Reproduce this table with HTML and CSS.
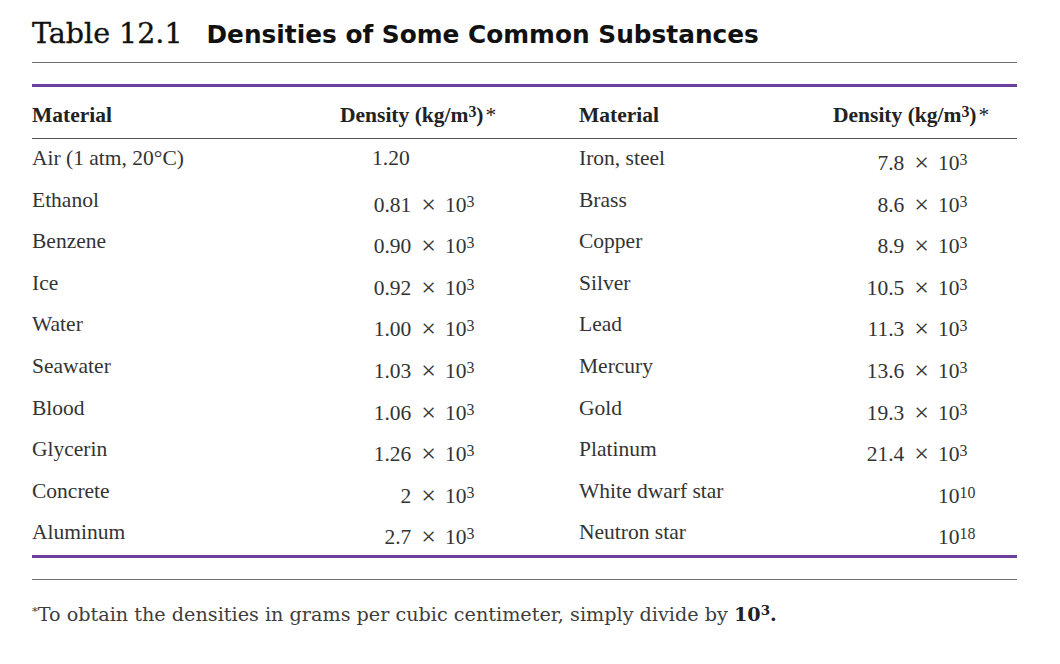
FILE: index.html
```html
<!DOCTYPE html>
<html lang="en">
<head>
<meta charset="utf-8">
<title>Table 12.1 Densities of Some Common Substances</title>
<link rel="stylesheet" href="styles.css">
</head>
<body>
<main class="sheet">
  <h1 class="title"><span class="title-num">Table 12.1</span><span class="title-cap">Densities of Some Common Substances</span></h1>
  <div class="rule-gray"></div>
  <div class="table">
    <div class="row head">
      <div class="cell">Material</div>
      <div class="cell">Density (kg/m<sup>3</sup>)<span class="ast">*</span></div>
      <div class="cell">Material</div>
      <div class="cell">Density (kg/m<sup>3</sup>)<span class="ast">*</span></div>
    </div>
    <div class="row">
      <div class="cell">Air (1 atm, 20°C)</div>
      <div class="cell plain">1.20</div>
      <div class="cell">Iron, steel</div>
      <div class="cell val"><span class="mant">7.8<span class="x">×</span></span><span class="pow">10<sup>3</sup></span></div>
    </div>
    <div class="row">
      <div class="cell">Ethanol</div>
      <div class="cell val"><span class="mant">0.81<span class="x">×</span></span><span class="pow">10<sup>3</sup></span></div>
      <div class="cell">Brass</div>
      <div class="cell val"><span class="mant">8.6<span class="x">×</span></span><span class="pow">10<sup>3</sup></span></div>
    </div>
    <div class="row">
      <div class="cell">Benzene</div>
      <div class="cell val"><span class="mant">0.90<span class="x">×</span></span><span class="pow">10<sup>3</sup></span></div>
      <div class="cell">Copper</div>
      <div class="cell val"><span class="mant">8.9<span class="x">×</span></span><span class="pow">10<sup>3</sup></span></div>
    </div>
    <div class="row">
      <div class="cell">Ice</div>
      <div class="cell val"><span class="mant">0.92<span class="x">×</span></span><span class="pow">10<sup>3</sup></span></div>
      <div class="cell">Silver</div>
      <div class="cell val"><span class="mant">10.5<span class="x">×</span></span><span class="pow">10<sup>3</sup></span></div>
    </div>
    <div class="row">
      <div class="cell">Water</div>
      <div class="cell val"><span class="mant">1.00<span class="x">×</span></span><span class="pow">10<sup>3</sup></span></div>
      <div class="cell">Lead</div>
      <div class="cell val"><span class="mant">11.3<span class="x">×</span></span><span class="pow">10<sup>3</sup></span></div>
    </div>
    <div class="row">
      <div class="cell">Seawater</div>
      <div class="cell val"><span class="mant">1.03<span class="x">×</span></span><span class="pow">10<sup>3</sup></span></div>
      <div class="cell">Mercury</div>
      <div class="cell val"><span class="mant">13.6<span class="x">×</span></span><span class="pow">10<sup>3</sup></span></div>
    </div>
    <div class="row">
      <div class="cell">Blood</div>
      <div class="cell val"><span class="mant">1.06<span class="x">×</span></span><span class="pow">10<sup>3</sup></span></div>
      <div class="cell">Gold</div>
      <div class="cell val"><span class="mant">19.3<span class="x">×</span></span><span class="pow">10<sup>3</sup></span></div>
    </div>
    <div class="row">
      <div class="cell">Glycerin</div>
      <div class="cell val"><span class="mant">1.26<span class="x">×</span></span><span class="pow">10<sup>3</sup></span></div>
      <div class="cell">Platinum</div>
      <div class="cell val"><span class="mant">21.4<span class="x">×</span></span><span class="pow">10<sup>3</sup></span></div>
    </div>
    <div class="row">
      <div class="cell">Concrete</div>
      <div class="cell val"><span class="mant">2<span class="x">×</span></span><span class="pow">10<sup>3</sup></span></div>
      <div class="cell">White dwarf star</div>
      <div class="cell val"><span class="mant"></span><span class="pow">10<sup>10</sup></span></div>
    </div>
    <div class="row">
      <div class="cell">Aluminum</div>
      <div class="cell val"><span class="mant">2.7<span class="x">×</span></span><span class="pow">10<sup>3</sup></span></div>
      <div class="cell">Neutron star</div>
      <div class="cell val"><span class="mant"></span><span class="pow">10<sup>18</sup></span></div>
    </div>
  </div>
  <div class="rule-gray rule-foot"></div>
  <p class="footnote"><sup>*</sup>To obtain the densities in grams per cubic centimeter, simply divide by <b>10<sup>3</sup>.</b></p>
</main>
</body>
</html>
```

FILE: styles.css
```css
html, body {
  margin: 0;
  padding: 0;
  background: #ffffff;
}

.sheet {
  width: 985px;
  padding: 0 43px 0 32px;
}

.title {
  margin: 0;
  padding-top: 14px;
  height: 36px;
  line-height: 36px;
  white-space: nowrap;
  color: #111111;
  font-weight: normal;
}

.title-num {
  font-family: "DejaVu Serif", serif;
  font-size: 28.5px;
  -webkit-text-stroke: 0.35px #111111;
  margin-right: 24px;
}

.title-cap {
  font-family: "DejaVu Sans", sans-serif;
  font-weight: 700;
  font-size: 24.8px;
}

.rule-gray {
  margin-top: 12px;
  height: 1px;
  background: #6e6e6e;
}

.table {
  margin-top: 21px;
  border-top: 3px solid #6c3f9e;
  border-bottom: 3px solid #6c3f9e;
  font-family: "Liberation Serif", "Times New Roman", serif;
  font-size: 21.5px;
  color: #333333;
}

.row {
  display: grid;
  grid-template-columns: 308px 239px 254px 184px;
  height: 41.6px;
}

.row.head {
  height: auto;
  border-bottom: 1px solid #555555;
  font-weight: 700;
  color: #222222;
}

.cell {
  line-height: 24px;
  padding-top: 7px;
  white-space: nowrap;
}

.head .cell {
  padding-top: 16px;
  padding-bottom: 11px;
}

.ast {
  font-weight: 400;
  margin-left: 2px;
}

sup {
  font-size: 0.74em;
  vertical-align: 0.34em;
  line-height: 0;
}

.plain {
  padding-left: 32px;
}

.val {
  display: flex;
  padding-top: 12px;
}

.mant {
  width: 105px;
  flex: none;
  text-align: right;
}

.x {
  display: inline-block;
  font-size: 26px;
  line-height: 0;
  margin: 0 9px 0 10px;
  vertical-align: -1px;
}

.rule-foot {
  margin-top: 21px;
}

.footnote {
  margin: 22px 0 0;
  font-family: "DejaVu Serif", serif;
  font-size: 19.2px;
  line-height: 26px;
  color: #3d3d3d;
  white-space: nowrap;
}

.footnote sup {
  font-size: 0.6em;
  vertical-align: 0.55em;
}

.footnote b {
  color: #222222;
}

.footnote b sup {
  font-size: 0.7em;
  vertical-align: 0.45em;
}
```
